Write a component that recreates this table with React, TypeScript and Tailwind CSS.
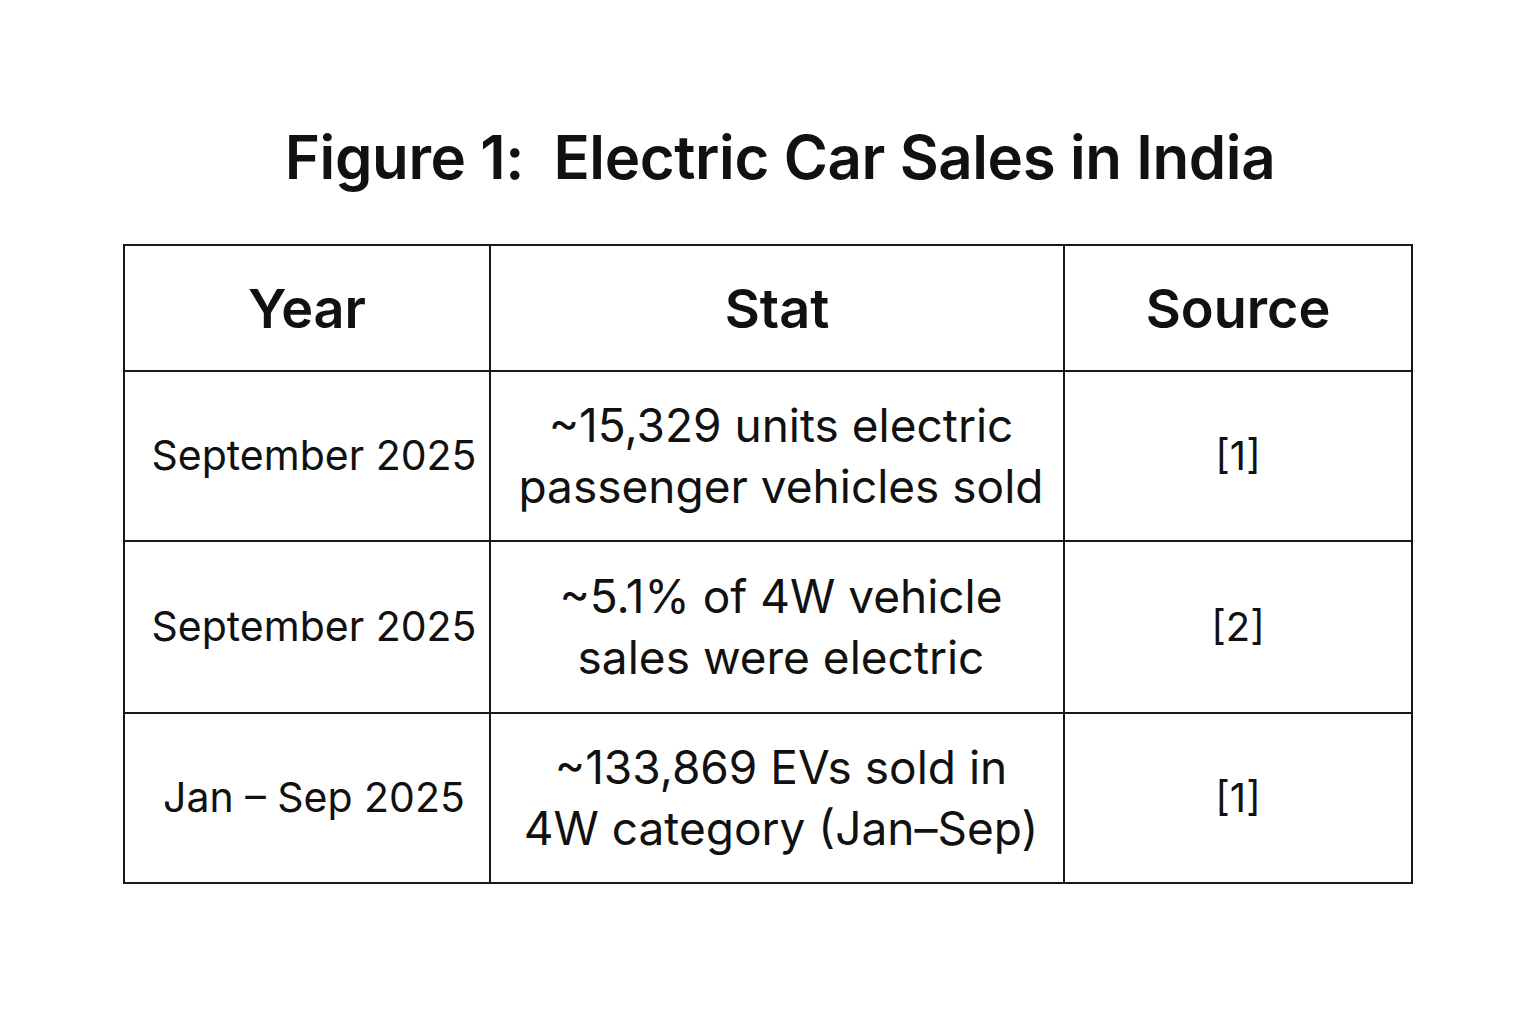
import React from "react";

const rows = [
  { year: "September 2025", stat: ["~15,329 units electric", "passenger vehicles sold"], src: "[1]" },
  { year: "September 2025", stat: ["~5.1% of 4W vehicle", "sales were electric"], src: "[2]" },
  { year: "Jan – Sep 2025", stat: ["~133,869 EVs sold in", "4W category (Jan–Sep)"], src: "[1]" },
];

export default function App() {
  return (
    <div
      className="w-[1536px] h-[1024px] bg-white text-[#111] flex flex-col items-center"
      style={{ fontFamily: "Inter, 'Noto Sans', sans-serif" }}
    >
      <h1 className="mt-[122px] ml-[24px] h-[70px] text-[60px] leading-[70px] font-semibold tracking-[-0.4px] whitespace-pre">
        {"Figure 1:  Electric Car Sales in India"}
      </h1>
      <table className="mt-[52px] border-collapse table-fixed w-[1288px]">
        <colgroup>
          <col className="w-[366px]" />
          <col className="w-[574px]" />
          <col className="w-[348px]" />
        </colgroup>
        <thead>
          <tr className="h-[126px]">
            {["Year", "Stat", "Source"].map((h) => (
              <th
                key={h}
                className="border-2 border-[#1a1a1a] text-[54px] font-semibold text-center align-middle p-0"
              >
                {h}
              </th>
            ))}
          </tr>
        </thead>
        <tbody>
          {rows.map((r, i) => (
            <tr key={i} className={i === 1 ? "h-[172px]" : "h-[170px]"}>
              <td className="border-2 border-[#1a1a1a] text-center align-middle text-[41px] p-0 pl-[14px] whitespace-nowrap">
                {r.year}
              </td>
              <td className="border-2 border-[#1a1a1a] text-center align-middle text-[46px] leading-[61px] p-0 pl-[8px] whitespace-nowrap">
                <div>{r.stat[0]}</div>
                <div>{r.stat[1]}</div>
              </td>
              <td className="border-2 border-[#1a1a1a] text-center align-middle text-[40px] p-0">
                {r.src}
              </td>
            </tr>
          ))}
        </tbody>
      </table>
    </div>
  );
}
